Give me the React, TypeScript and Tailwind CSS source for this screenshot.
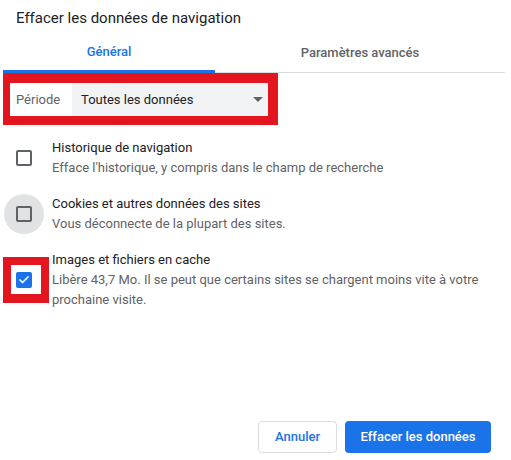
import { Check } from "lucide-react"

type Item = {
  title: string
  desc: string
  checked?: boolean
  focused?: boolean
  marked?: boolean
}

const items: Item[] = [
  {
    title: "Historique de navigation",
    desc: "Efface l'historique, y compris dans le champ de recherche",
  },
  {
    title: "Cookies et autres données des sites",
    desc: "Vous déconnecte de la plupart des sites.",
    focused: true,
  },
  {
    title: "Images et fichiers en cache",
    desc: "Libère 43,7 Mo. Il se peut que certains sites se chargent moins vite à votre prochaine visite.",
    checked: true,
    marked: true,
  },
]

function Checkbox({ checked }: { checked?: boolean }) {
  if (checked) {
    return (
      <div className="w-4 h-4 rounded-[2px] bg-[#1a73e8] flex items-center justify-center">
        <Check className="w-3 h-3 text-white" strokeWidth={3.5} />
      </div>
    )
  }
  return <div className="w-4 h-4 rounded-[2px] border-2 border-[#5f6368]" />
}

function Row({ item }: { item: Item }) {
  return (
    <div className={`flex items-center ${item.marked ? "pl-[3px] gap-[3px]" : "pl-1 gap-2"}`}>
      {item.marked ? (
        <div className="w-[46px] h-[46px] shrink-0 border-[8px] border-b-[9px] border-[#e3161f] bg-white flex items-center pl-[5px]">
          <Checkbox checked={item.checked} />
        </div>
      ) : (
        <div
          className={`w-10 h-10 shrink-0 rounded-full flex items-center justify-center ${
            item.focused ? "bg-[#e1e2e3]" : ""
          }`}
        >
          <Checkbox checked={item.checked} />
        </div>
      )}
      <div className="pr-6 text-[13px] leading-[20px]">
        <div className="text-[#202124]">{item.title}</div>
        <div className="text-[#5f6368]">{item.desc}</div>
      </div>
    </div>
  )
}

export default function App() {
  return (
    <div className="w-[511px] h-[460px] bg-white flex flex-col font-['Roboto',sans-serif]">
      <div className="pl-4 pt-[8px] pb-[4px] text-[15px] leading-[20px] text-[#202124]">
        Effacer les données de navigation
      </div>

      <div className="flex ml-[3px] mr-[6px] text-[13px] font-medium">
        <div className="w-[212px] h-[41px] flex items-center justify-center pt-[2px] text-[#1a73e8] border-b-[3px] border-[#1a73e8]">
          Général
        </div>
        <div className="flex-1 h-[41px] flex items-center justify-center pt-[1px] text-[#5f6368] border-b border-[#dadce0]">
          Paramètres avancés
        </div>
      </div>

      <div className="ml-[3px] w-[275px] border-[#e3161f] border-l-[7px] border-t-[10px] border-r-[10px] border-b-[9px] flex h-[52px] bg-white text-[13px]">
        <div className="w-[62px] pl-[6px] flex items-center text-[#5f6368]">Période</div>
        <div className="flex-1 bg-[#f1f3f4] flex items-center justify-between pl-[9px] pr-[5px] text-[#202124]">
          <span>Toutes les données</span>
          <svg width="10" height="5" viewBox="0 0 10 5">
            <path d="M0 0h10L5 5z" fill="#5f6368" />
          </svg>
        </div>
      </div>

      <div className="mt-[13px] flex flex-col gap-4">
        {items.map((item) => (
          <Row key={item.title} item={item} />
        ))}
      </div>

      <div className="flex-1" />

      <div className="flex justify-end gap-2 pr-5 pb-[7px] text-[13px] font-medium">
        <button className="w-[79px] h-8 rounded-[4px] border border-[#dadce0] bg-white text-[#1a73e8]">
          Annuler
        </button>
        <button className="w-[146px] h-8 rounded-[4px] bg-[#1a73e8] text-white">
          Effacer les données
        </button>
      </div>
    </div>
  )
}
